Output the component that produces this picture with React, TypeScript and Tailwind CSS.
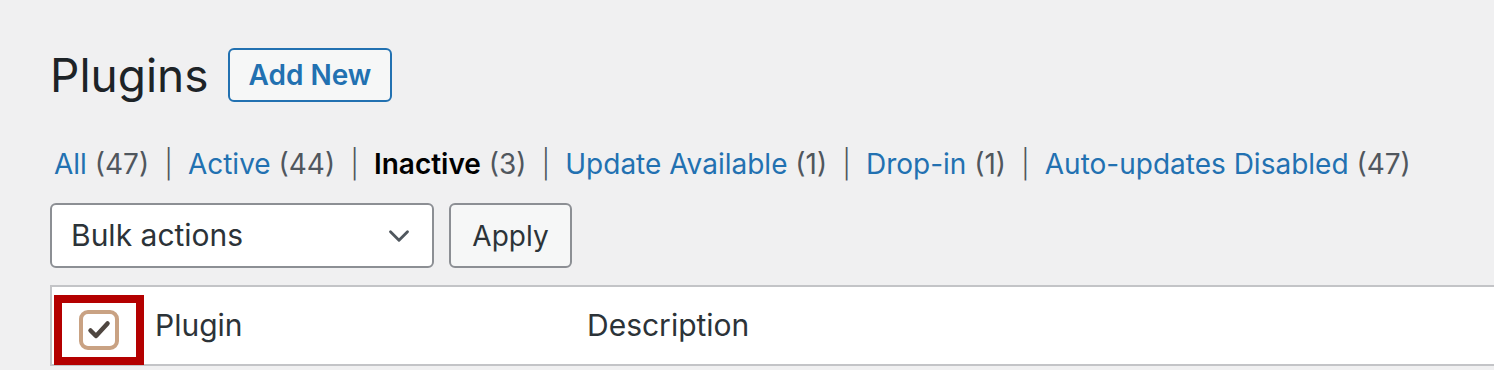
import { ChevronDown } from 'lucide-react'

const filters = [
  { label: 'All', count: 47 },
  { label: 'Active', count: 44 },
  { label: 'Inactive', count: 3, current: true },
  { label: 'Update Available', count: 1 },
  { label: 'Drop-in', count: 1 },
  { label: 'Auto-updates Disabled', count: 47 },
]

function App() {
  return (
    <div
      className="w-full h-[370px] overflow-hidden bg-[#f0f0f1] pl-[50px]"
      style={{ fontFamily: 'Inter, "Noto Sans", sans-serif' }}
    >
      <div className="flex items-center h-[54px] mt-[48px]">
        <h1 className="text-[46px] leading-none text-[#1d2327] font-normal">Plugins</h1>
        <a
          href="#"
          className="ml-[19px] h-[54px] px-[19px] flex items-center border-2 border-[#2271b1] rounded-[6px] bg-[#f6f7f7] text-[#2271b1] text-[28px] font-semibold"
        >
          Add New
        </a>
      </div>

      <ul className="flex items-center h-[36px] mt-[44px] pl-[4px] text-[28px] text-[#50575e]">
        {filters.map((f, i) => (
          <li key={f.label} className="flex items-center whitespace-pre">
            {f.current ? (
              <span className="font-semibold text-black">{f.label}</span>
            ) : (
              <a href="#" className="text-[#2271b1]">{f.label}</a>
            )}
            <span> ({f.count})</span>
            {i < filters.length - 1 && (
              <span className="mx-[15px] font-light text-[#50575e]">|</span>
            )}
          </li>
        ))}
      </ul>

      <div className="flex items-center gap-[15px] mt-[21px] h-[65px]">
        <div className="w-[384px] h-[65px] flex items-center justify-between pl-[19px] pr-[16px] bg-white border-2 border-[#8c8f94] rounded-[6px] text-[30px] text-[#2c3338]">
          <span>Bulk actions</span>
          <ChevronDown size={34} strokeWidth={2} className="text-[#50575e]" />
        </div>
        <button className="w-[123px] h-[65px] flex items-center justify-center bg-[#f6f7f7] border-2 border-[#8c8f94] rounded-[6px] text-[28px] text-[#2c3338]">
          Apply
        </button>
      </div>

      <div className="mt-[17px] h-[81px] bg-white border-y-2 border-l-2 border-[#c3c4c7] flex items-start">
        <div className="ml-[2px] mt-[8px] w-[90px] h-[70px] border-8 border-[#b40000] flex items-center justify-center">
          <div className="w-[40px] h-[40px] rounded-[9px] border-4 border-[#c9a283] flex items-center justify-center">
            <svg width="24" height="20" viewBox="0 0 24 20" fill="none">
              <path d="M3.5 10.5 L9 16 L20.5 3.5" stroke="#4f4640" strokeWidth="4.5" strokeLinecap="round" strokeLinejoin="round" />
            </svg>
          </div>
        </div>
        <div className="h-full flex items-center">
          <span className="ml-[11px] w-[432px] text-[30px] text-[#2c3338]">Plugin</span>
          <span className="text-[30px] text-[#2c3338]">Description</span>
        </div>
      </div>
    </div>
  )
}

export default App
